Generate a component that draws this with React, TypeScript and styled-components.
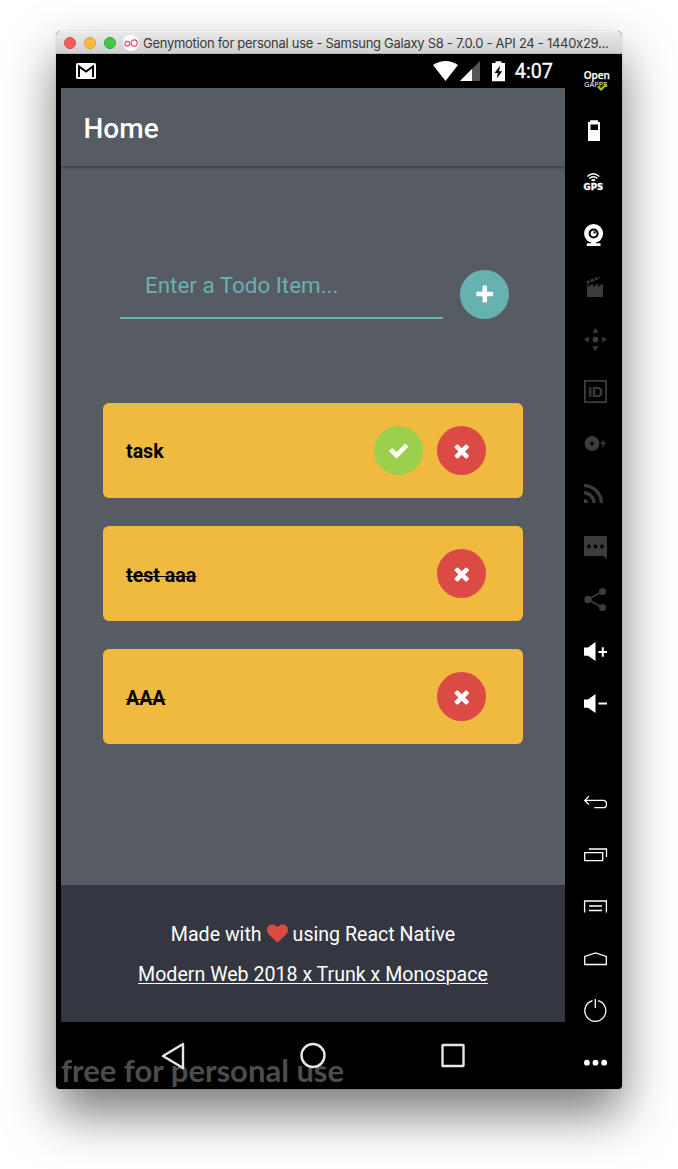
import React from "react";
import styled, { createGlobalStyle } from "styled-components";

const GlobalStyle = createGlobalStyle`
  * { box-sizing: border-box; }
  body {
    margin: 0;
    background: #fff;
    font-family: Roboto, "Liberation Sans", sans-serif;
  }
`;

const Desktop = styled.div`
  height: 1169px;
  padding: 31px 56px 0;
  overflow: hidden;
`;

const Window = styled.div`
  width: 566px;
  height: 1058px;
  display: flex;
  flex-direction: column;
  border-radius: 5px 5px 4px 4px;
  background: #000;
  box-shadow: 0 0 1px rgba(0, 0, 0, 0.45), 0 25px 50px rgba(0, 0, 0, 0.52);
`;

const TitleBar = styled.header`
  height: 23px;
  flex: none;
  display: flex;
  align-items: center;
  padding: 1px 8px 0;
  border-radius: 5px 5px 0 0;
  background: linear-gradient(#e9e9e9, #d0d0d0);
  border-top: 1px solid #f4f4f4;
  border-bottom: 1px solid #b4b4b4;
`;

const Light = styled.span<{ $fill: string; $edge: string }>`
  width: 12px;
  height: 12px;
  margin-right: 8px;
  border-radius: 50%;
  background: ${(p) => p.$fill};
  border: 1px solid ${(p) => p.$edge};
`;

const AppBadge = styled.svg`
  width: 16px;
  height: 16px;
  margin: 0 4px 0 -1px;
`;

const WindowTitle = styled.span`
  font: 13px/20px Inter, "Liberation Sans", sans-serif;
  letter-spacing: -0.28px;
  color: #3a3a3a;
  white-space: nowrap;
`;

const Body = styled.div`
  flex: 1;
  display: flex;
  padding-left: 5px;
`;

const Device = styled.main`
  width: 504px;
  display: flex;
  flex-direction: column;
`;

const StatusBar = styled.div`
  height: 34px;
  display: flex;
  align-items: center;
  padding: 1px 11px 0 15px;
  color: #fff;
`;

const MailIcon = styled.svg`
  margin-top: -1px;
`;

const StatusRight = styled.div`
  margin-left: auto;
  display: flex;
  align-items: center;
`;

const Clock = styled.span`
  padding-top: 1px;
  margin: 0 1px 0 9px;
  font-size: 19.8px;
  font-weight: 400;
  line-height: 32px;
  -webkit-text-stroke: 0.3px #fff;
`;

const AppBar = styled.div`
  position: relative;
  height: 78px;
  display: flex;
  align-items: center;
  padding: 2px 22px 0 22.5px;
  background: #575b64;
  box-shadow: 0 1px 4px rgba(0, 0, 0, 0.4);
  clip-path: inset(0 0 -6px 0);
`;

const ScreenTitle = styled.h1`
  margin: 0;
  font-size: 28px;
  font-weight: 500;
  color: #fff;
`;

const Content = styled.section`
  height: 719px;
  padding: 104px 42px 0;
  background: #575b64;
`;

const EntryRow = styled.div`
  height: 49px;
  display: flex;
  align-items: center;
  justify-content: space-between;
  margin: 0 14px 84px 17px;
`;

const Field = styled.div`
  width: 323px;
  height: 49px;
  padding: 1px 25px 0;
  border-bottom: 2px solid #67b1b0;
  border-radius: 1px;
  color: #67b1b0;
  font-size: 22.4px;
  line-height: 28px;
`;

const RoundButton = styled.button<{ $color: string }>`
  width: 49px;
  height: 49px;
  padding: 0;
  border: 0;
  border-radius: 50%;
  display: flex;
  align-items: center;
  justify-content: center;
  background: ${(p) => p.$color};
`;

const TodoList = styled.ul`
  margin: 0;
  padding: 0;
  list-style: none;
  display: grid;
  gap: 28px;
`;

const TodoCard = styled.li`
  height: 95px;
  display: flex;
  align-items: center;
  gap: 14px;
  padding: 0 37px 0 23px;
  border-radius: 6px;
  background: #f0ba41;
`;

const TodoText = styled.span<{ $done?: boolean }>`
  flex: 1;
  padding-top: ${(p) => (p.$done ? 3 : 2)}px;
  font-size: 19.6px;
  font-weight: 700;
  color: #000;
  text-decoration: ${(p) => (p.$done ? "line-through" : "none")};
  text-decoration-thickness: 1px;
`;

const Footer = styled.footer`
  height: 137px;
  padding-top: 30px;
  background: #343741;
  color: #fff;
  font-size: 19.6px;
  text-align: center;
`;

const FooterLine = styled.p<{ $underline?: boolean }>`
  margin: 0;
  height: 40px;
  line-height: 40px;
  display: flex;
  align-items: center;
  justify-content: center;
  gap: 5px;
  white-space: nowrap;
  text-decoration: ${(p) => (p.$underline ? "underline" : "none")};
  text-decoration-thickness: 1px;
  text-underline-offset: 2px;

  svg {
    margin-top: -3px;
  }
`;

const NavBar = styled.nav`
  position: relative;
  height: 67px;
  display: flex;
  justify-content: space-between;
  align-items: center;
  padding: 0 98px;
`;

const Watermark = styled.span`
  position: absolute;
  left: 0;
  bottom: 0;
  font: 700 31px/38px Lato, sans-serif;
  color: #4c4c4c;
  white-space: nowrap;
`;

const NavGlyph = styled.svg`
  position: relative;
  width: 28px;
  height: 28px;
  fill: none;
  stroke: #e6e6e6;
  stroke-width: 2.4;
  stroke-linejoin: round;
`;

const Toolbar = styled.aside`
  width: 57px;
  display: flex;
  flex-direction: column;
  align-items: center;
  justify-content: space-between;
  padding: 14px 0 15px 4px;
`;

const ToolGroup = styled.div`
  display: grid;
  gap: 28px;
`;

const Tool = styled.svg<{ $dim?: boolean }>`
  display: block;
  width: 24px;
  height: 24px;
  overflow: visible;
  color: ${(p) => (p.$dim ? "#3c3c3a" : "#fff")};
  fill: currentColor;
`;

const LineTool = styled(Tool)`
  fill: none;
  stroke: currentColor;
  stroke-width: 1.3;
`;

const GLYPHS = {
  plus: "M1600 736v192q0 40-28 68t-68 28h-416v416q0 40-28 68t-68 28h-192q-40 0-68-28t-28-68v-416h-416q-40 0-68-28t-28-68v-192q0-40 28-68t68-28h416v-416q0-40 28-68t68-28h192q40 0 68 28t28 68v416h416q40 0 68 28t28 68z",
  check: "M1671 566q0 40-28 68l-724 724-136 136q-28 28-68 28t-68-28l-136-136-362-362q-28-28-28-68t28-68l136-136q28-28 68-28t68 28l294 295 656-657q28-28 68-28t68 28l136 136q28 28 28 68z",
  times: "M1490 1322q0 40-28 68l-136 136q-28 28-68 28t-68-28l-294-294-294 294q-28 28-68 28t-68-28l-136-136q-28-28-28-68t28-68l294-294-294-294q-28-28-28-68t28-68l136-136q28-28 68-28t68 28l294 294 294-294q28-28 68-28t68 28l136 136q28 28 28 68t-28 68l-294 294 294 294q28 28 28 68z",
  heart: "M896 1664q-26 0-44-18l-624-602q-10-8-27.500-26t-55.500-65.500-68-97.500-53.500-121-23.500-138q0-220 127-344t351-124q62 0 126.500 21.500t120 58 95.500 68.500 76 68q36-36 76-68t95.500-68.500 120-58 126.500-21.500q224 0 351 124t127 344q0 221-229 450l-623 600q-18 18-44 18z",
};

function Glyph({ name, size = 21.5, color = "#fff" }: { name: keyof typeof GLYPHS; size?: number; color?: string }) {
  return (
    <svg width={size} height={size} viewBox="0 0 1792 1792" fill={color}>
      <path d={GLYPHS[name]} />
    </svg>
  );
}

const todos = [
  { text: "task", done: false },
  { text: "test aaa", done: true },
  { text: "AAA", done: true },
];

function StatusIcons() {
  return (
    <svg width="73" height="21" viewBox="0 0 73 21" fill="#fff">
      <path d="M0 4Q12.500-4 25 4L12.500 20Z" />
      <path d="M47 0V20H27Z" fill="#555" />
      <path d="M39 8V20H27Z" />
      <path d="M59 2h3.500V.3h6V2H72v18.300H59Z" />
      <path d="M67.200 4.500 61.500 12h3.300l-1 5.500 5.400-7.300h-3.200Z" fill="#000" />
    </svg>
  );
}

function SideTools() {
  return (
    <Toolbar>
      <ToolGroup>
        <Tool viewBox="0 0 24 24">
          <text x="-0.300" y="10.800" fontFamily="Open Sans" fontSize="10" fontWeight="600" stroke="currentColor" strokeWidth=".25">Open</text>
          <text x="0" y="19" fontFamily="Open Sans" fontSize="7.500" fontWeight="500">GAPPS</text>
          <path d="M13.800 18.500l3.400 3 5.300-5.700" fill="none" stroke="#9fc41c" strokeWidth="2.200" />
        </Tool>
        <Tool viewBox="0 0 24 24">
          <path fillRule="evenodd" d="M4 2h2V.300h8V2h2v19H4ZM6.500 4.500v5.500h7.500V4.500Z" />
        </Tool>
        <Tool viewBox="0 0 24 24">
          <g fill="none" stroke="currentColor" strokeWidth="1.300">
            <path d="M3.300 4.600Q9.300-1 15.300 4.600M5.200 6.600Q9.300 2.800 13.400 6.600" />
          </g>
          <path d="M6.800 8.200Q9.300 6 11.800 8.200L9.300 9.400Z" />
          <text x="-0.400" y="18" fontFamily="DejaVu Sans" fontWeight="700" fontSize="8.600" stroke="currentColor" strokeWidth=".3">GPS</text>
        </Tool>
        <Tool viewBox="0 0 24 24">
          <path d="M2.800 19.300h13.700V22H2.800ZM7 17h5v3H7Z" />
          <circle cx="9.600" cy="9.500" r="9.500" />
          <circle cx="9.600" cy="9.500" r="5" fill="#000" />
          <circle cx="9.600" cy="9.500" r="2.900" />
          <path d="M9.500 9.500V7.300h2v2.200Z" fill="#000" />
        </Tool>
        <Tool $dim viewBox="0 0 24 24">
          <path d="M3 8.500h16V21H3Z" />
          <path d="M2 5.300 15 .200l1 2.400L3.500 7.500Z" />
          <path d="M4 10.500 6.500 8.500M9 10.500l2.500-2M14 10.500l2.500-2M5 4l2 2M9 2.200l2 2M13 .500l2 2" stroke="#000" strokeWidth="1.100" />
        </Tool>
        <Tool $dim viewBox="0 0 24 24">
          <circle cx="11.500" cy="11.500" r="2.900" />
          <path d="M11.500 0l3 4.800h-6ZM11.500 23l3-4.800h-6ZM0 11.500l4.800-3v6ZM23 11.500l-4.800-3v6Z" />
        </Tool>
        <Tool $dim viewBox="0 0 24 24">
          <path d="M.900.900h21.200v21.200H.900Z" fill="none" stroke="currentColor" strokeWidth="1.800" />
          <text x="3.900" y="17.200" fontFamily="Liberation Sans" fontWeight="700" fontSize="15.500" letterSpacing="-.4">ID</text>
        </Tool>
        <Tool $dim viewBox="0 0 24 24">
          <circle cx="8" cy="11.500" r="7.400" />
          <circle cx="8" cy="11.500" r="1.900" fill="#000" />
          <path d="M20.300 6.500 16.300 12h2.800l-1.800 4.800 5-6.300h-3Z" />
        </Tool>
        <Tool $dim viewBox="0 0 24 24">
          <path d="M0 15A4 4 0 0 1 4 19H0Z" />
          <g fill="none" stroke="currentColor" strokeWidth="3.300">
            <path d="M0 9a9.800 9.800 0 0 1 10 10M0 1.700A17.300 17.300 0 0 1 17.300 19" />
          </g>
        </Tool>
        <Tool $dim viewBox="0 0 24 24">
          <path d="M0 0h23v23l-4-3H0Z" />
          <g fill="#000"><circle cx="5" cy="10.500" r="1.900" /><circle cx="11.500" cy="10.500" r="1.900" /><circle cx="18" cy="10.500" r="1.900" /></g>
        </Tool>
        <Tool $dim viewBox="0 0 24 24">
          <path d="M18.500 3.500 4 11.500l14.500 8" fill="none" stroke="currentColor" strokeWidth="1.800" />
          <circle cx="18.500" cy="3.500" r="3.500" /><circle cx="4" cy="11.500" r="3.700" /><circle cx="18.500" cy="19.500" r="3.500" />
        </Tool>
        <Tool viewBox="0 0 24 24">
          <path d="M0 7.500h4L11.500 2v19L4 15.800H0ZM14.500 11h3.300V7.300h2V11h3.200v2h-3.200v3.700h-2V13h-3.300Z" />
        </Tool>
        <Tool viewBox="0 0 24 24">
          <path d="M0 7.500h4L11.500 2v19L4 15.800H0ZM14.500 10.500H23v2h-8.500Z" />
        </Tool>
      </ToolGroup>
      <ToolGroup>
        <LineTool viewBox="0 0 24 24">
          <path d="M4.800 6.300.800 10.400l4 4.100M.800 10.400h18.500a3.300 3.300 0 0 1 3.200 3.500v.500a3.300 3.300 0 0 1-3.200 3.300h-9" />
        </LineTool>
        <LineTool viewBox="0 0 24 24">
          <path d="M.700 10.700h18v8h-18ZM4.800 7h17.700v8" />
        </LineTool>
        <LineTool viewBox="0 0 24 24">
          <path d="M.600 18.500V7h21.800v11.500M5 12h13M5 16.500h13" />
        </LineTool>
        <LineTool viewBox="0 0 24 24">
          <path d="M.700 18.500v-8L11.500 7l10.800 3.500v8Z" />
        </LineTool>
        <LineTool viewBox="0 0 24 24">
          <path d="M8.500 2.700a10.500 10.500 0 1 0 5.600 0M11.300 1v9" />
        </LineTool>
        <Tool viewBox="0 0 24 24">
          <circle cx="2.900" cy="12.700" r="2.900" /><circle cx="11.500" cy="12.700" r="2.900" /><circle cx="20.200" cy="12.700" r="2.900" />
        </Tool>
      </ToolGroup>
    </Toolbar>
  );
}

export default function App() {
  return (
    <Desktop>
      <GlobalStyle />
      <Window>
        <TitleBar>
          <Light $fill="#f45d58" $edge="#dd4b47" />
          <Light $fill="#f9bb3b" $edge="#dda02f" />
          <Light $fill="#41c845" $edge="#30ab35" />
          <AppBadge viewBox="0 0 16 16">
            <circle cx="8" cy="8" r="8" fill="#fff" />
            <g fill="none" stroke="#e2356f" strokeWidth="1.100">
              <circle cx="4.300" cy="8.700" r="2.400" /><circle cx="11.200" cy="8" r="3.100" />
            </g>
          </AppBadge>
          <WindowTitle>Genymotion for personal use - Samsung Galaxy S8 - 7.0.0 - API 24 - 1440x29...</WindowTitle>
        </TitleBar>
        <Body>
          <Device>
            <StatusBar>
              <MailIcon width="20" height="16" viewBox="0 0 20 16">
                <rect width="20" height="16" rx="1.500" fill="#fff" />
                <path d="M3 14V3.500l7 5 7-5V14" fill="none" stroke="#000" strokeWidth="2" />
              </MailIcon>
              <StatusRight>
                <StatusIcons />
                <Clock>4:07</Clock>
              </StatusRight>
            </StatusBar>
            <AppBar>
              <ScreenTitle>Home</ScreenTitle>
            </AppBar>
            <Content>
              <EntryRow>
                <Field>Enter a Todo Item...</Field>
                <RoundButton $color="#67b1b0"><Glyph name="plus" /></RoundButton>
              </EntryRow>
              <TodoList>
                {todos.map((t) => (
                  <TodoCard key={t.text}>
                    <TodoText $done={t.done}>{t.text}</TodoText>
                    {!t.done && <RoundButton $color="#9bcf4c"><Glyph name="check" /></RoundButton>}
                    <RoundButton $color="#dc4a46"><Glyph name="times" /></RoundButton>
                  </TodoCard>
                ))}
              </TodoList>
            </Content>
            <Footer>
              <FooterLine>
                <span>Made with</span>
                <Glyph name="heart" size={21} color="#dc4a46" />
                <span>using React Native</span>
              </FooterLine>
              <FooterLine $underline>Modern Web 2018 x Trunk x Monospace</FooterLine>
            </Footer>
            <NavBar>
              <Watermark>free for personal use</Watermark>
              <NavGlyph viewBox="0 0 28 28"><path d="M24 2v24L4 14Z" /></NavGlyph>
              <NavGlyph viewBox="0 0 28 28"><circle cx="14" cy="13.500" r="11.500" /></NavGlyph>
              <NavGlyph viewBox="0 0 28 28"><rect x="3.500" y="3" width="21" height="21" rx=".5" /></NavGlyph>
            </NavBar>
          </Device>
          <SideTools />
        </Body>
      </Window>
    </Desktop>
  );
}
